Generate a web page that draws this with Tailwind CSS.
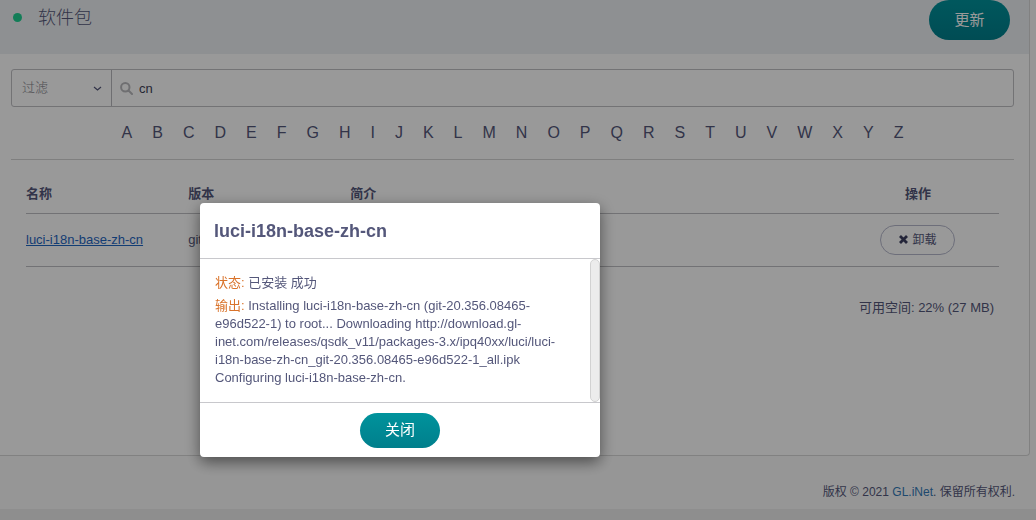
<!DOCTYPE html>
<html lang="zh-CN">
<head>
<meta charset="utf-8">
<title>软件包</title>
<script src="https://cdn.jsdelivr.net/npm/@tailwindcss/browser@4"></script>
</head>
<body class="min-h-screen bg-[#ededed] font-['Liberation_Sans','Noto_Sans_CJK_SC',sans-serif] text-[13px] leading-[18px] text-[#54577a]">
<div class="bg-[#fbfbfb]">
  <main class="mr-[6px] flex h-[456px] flex-col rounded-br border-r border-b border-[#d8d8d8] bg-white">
    <header class="flex h-[54px] shrink-0 items-start justify-between bg-[#edf0f3] pr-[19px] pl-[13px]">
      <div class="flex h-[35px] items-center gap-4">
        <span class="size-[9px] rounded-full bg-[#1fd192]"></span>
        <h1 class="text-[18px] font-light">软件包</h1>
      </div>
      <button type="button" class="h-10 w-[81px] rounded-full bg-linear-to-b from-[#00939c] to-[#007f8c] text-[15px] text-white">更新</button>
    </header>
    <div class="flex grow flex-col px-[11px] pt-[15px] pr-[15px]">
      <form class="flex h-[38px] shrink-0 rounded-[3px] border border-[#c0c0c4]">
        <label class="relative flex w-[100px] items-center border-r border-[#b8b8bc]">
          <select aria-label="过滤" class="size-full appearance-none bg-transparent pl-[10px] font-light text-[#86868c]"><option>过滤</option></select>
          <svg class="pointer-events-none absolute right-[9px] size-[9px]" viewBox="0 0 9 9" fill="none" stroke="#54577a" stroke-width="1.200"><path d="M1 3l3.500 3L8 3"/></svg>
        </label>
        <label class="flex grow items-center gap-[6px] pl-2">
          <svg class="size-[13px] shrink-0" viewBox="0 0 13 13" fill="none" stroke="#b9b9bd" stroke-width="2"><circle cx="5.300" cy="5.300" r="4.200"/><path d="M8.500 8.500l3.500 3.500" stroke-linecap="round"/></svg>
          <input type="text" aria-label="过滤条件" value="cn" class="h-full grow bg-transparent text-[#3f4258] outline-none">
        </label>
      </form>
      <nav class="flex h-[53px] shrink-0 items-center justify-center gap-5 border-b border-[#d4d4d4] text-[16px]">
        <a href="#A">A</a><a href="#B">B</a><a href="#C">C</a><a href="#D">D</a><a href="#E">E</a><a href="#F">F</a><a href="#G">G</a><a href="#H">H</a><a href="#I">I</a><a href="#J">J</a><a href="#K">K</a><a href="#L">L</a><a href="#M">M</a><a href="#N">N</a><a href="#O">O</a><a href="#P">P</a><a href="#Q">Q</a><a href="#R">R</a><a href="#S">S</a><a href="#T">T</a><a href="#U">U</a><a href="#V">V</a><a href="#W">W</a><a href="#X">X</a><a href="#Y">Y</a><a href="#Z">Z</a>
      </nav>
      <div class="pt-4 pr-[15px] pl-[15px]">
        <table class="w-full table-fixed border-collapse text-left">
          <thead>
            <tr class="h-[37px] border-b border-[#bfbfc3]">
              <th class="w-1/6">名称</th><th class="w-1/6">版本</th><th class="w-1/2">简介</th><th class="w-1/6 text-center">操作</th>
            </tr>
          </thead>
          <tbody>
            <tr class="h-[53px] border-b border-[#bfbfc3]">
              <td><a href="#package" class="text-[#1f66c2] underline">luci-i18n-base-zh-cn</a></td>
              <td>git</td>
              <td></td>
              <td>
                <button type="button" class="mx-auto flex h-[30px] w-[75px] items-center justify-center gap-1 rounded-full border border-[#b6b8cc] text-[12px]">
                  <svg class="size-[9px]" viewBox="0 0 9 9" stroke="#3c3f60" stroke-width="2.800"><path d="M1 1l7 7M8 1L1 8"/></svg>卸载
                </button>
              </td>
            </tr>
          </tbody>
        </table>
        <p class="mt-8 pr-[5px] text-right">可用空间: 22% (27 MB)</p>
      </div>
    </div>
  </main>
  <footer class="flex h-[53px] items-end justify-end pr-[21px] pb-2 text-[12px]">
    <p>版权 © 2021 <a href="#glinet" class="text-[#337ab7]">GL.iNet</a>. 保留所有权利.</p>
  </footer>
</div>

<div class="fixed inset-0 bg-black/40 pt-[203px] pl-[200px]">
  <section role="dialog" aria-modal="true" aria-labelledby="dialog-title" class="w-[400px] overflow-hidden rounded bg-white shadow-[0_5px_15px_rgba(0,0,0,0.5)]">
    <header class="flex h-14 items-center border-b border-[#c8c8cc] px-[14px]">
      <h2 id="dialog-title" class="text-[18px] font-bold">luci-i18n-base-zh-cn</h2>
    </header>
    <div class="flex h-[143px] justify-between">
      <div class="w-[375px] pt-[15px] pl-[15px]">
        <p><span class="text-[#d9732b]">状态:</span> 已安装 成功</p>
        <p class="mt-[5px] w-[346px]"><span class="text-[#d9732b]">输出:</span> Installing luci-i18n-base-zh-cn (git-20.356.08465-e96d522-1) to root... Downloading http://download.gl-inet.com/releases/qsdk_v11/packages-3.x/ipq40xx/luci/luci-i18n-base-zh-cn_git-20.356.08465-e96d522-1_all.ipk Configuring luci-i18n-base-zh-cn.</p>
      </div>
      <div class="w-[10px] rounded-full border border-[#d2d2d2] bg-[#ececec]"></div>
    </div>
    <footer class="flex h-[55px] items-center justify-center border-t border-[#c8c8cc]">
      <button type="button" class="h-[35px] w-20 rounded-full bg-linear-to-b from-[#00939c] to-[#007f8c] text-[15px] text-white">关闭</button>
    </footer>
  </section>
</div>
</body>
</html>
